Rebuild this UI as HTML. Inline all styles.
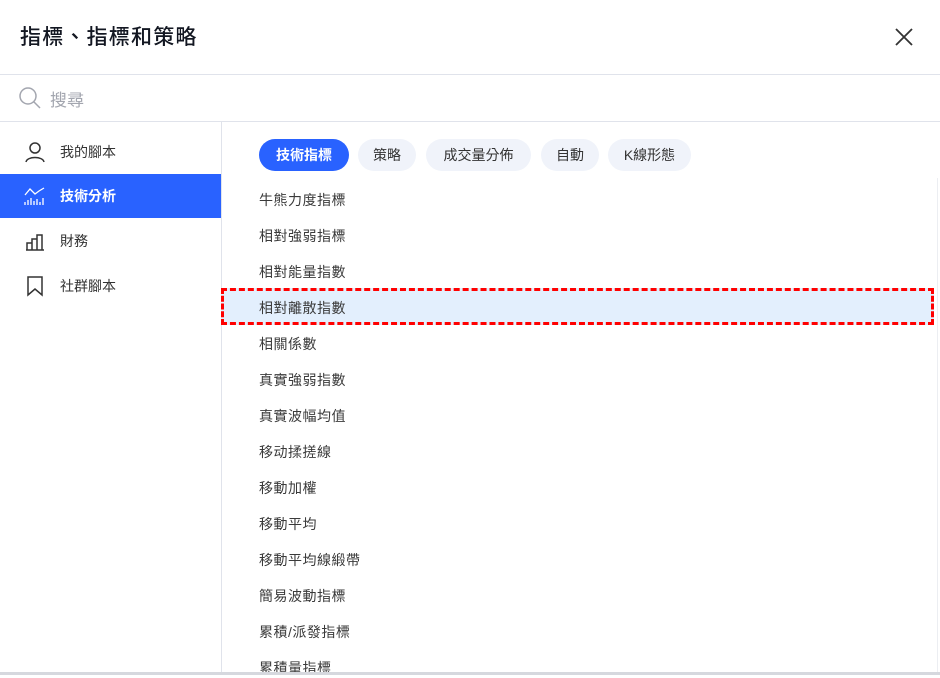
<!DOCTYPE html>
<html><head><meta charset="utf-8"><style>
*{margin:0;padding:0;box-sizing:border-box}
body{width:940px;height:675px;overflow:hidden;background:#fff;font-family:"Liberation Sans","Noto Sans CJK TC",sans-serif;color:#131722;position:relative}
.title{position:absolute;left:20px;top:21px;font-size:21px;font-weight:500;letter-spacing:1.2px}
.hr{position:absolute;left:0;width:940px;height:1px;background:#e0e3eb}
.search{position:absolute;left:50px;top:86px;font-size:17px;color:#a3a6af}
.side{position:absolute;left:0;top:121px;width:222px;height:554px;border-right:1px solid #e0e3eb}
.si{position:absolute;left:0;width:221px;height:44px;font-size:14px;color:#333}
.si span{position:absolute;left:60px;top:12px}
.si svg{position:absolute;left:24px;top:11px}
.act{background:#2962ff;color:#fff;font-weight:bold}
.pill{position:absolute;top:139px;height:32px;border-radius:16px;background:#f0f3fa;font-size:14px;color:#333;text-align:center;line-height:32px}
.item{position:absolute;left:259px;font-size:14px;color:#3a3a3a;letter-spacing:0.5px}
.hl{position:absolute;left:221px;top:288px;width:713px;height:37px;background:#e3effd;border:3px dashed #f00}
</style></head><body>
<div class="title">指標、指標和策略</div>
<svg style="position:absolute;left:894px;top:27px" width="20" height="20" viewBox="0 0 20 20"><path d="M2 2L18 18M18 2L2 18" stroke="#333" stroke-width="1.8"/></svg>
<div class="hr" style="top:74px"></div>
<svg style="position:absolute;left:18px;top:86px" width="24" height="24" viewBox="0 0 24 24"><circle cx="10" cy="10" r="8" fill="none" stroke="#a3a6af" stroke-width="1.5"/><path d="M16 16L22 22" stroke="#a3a6af" stroke-width="1.5"/></svg>
<div class="search">搜尋</div>
<div class="hr" style="top:121px"></div>
<div class="side">
<div class="si" style="top:9px"><svg width="22" height="22" viewBox="0 0 22 22"><circle cx="11" cy="7" r="5" fill="none" stroke="#333" stroke-width="1.5"/><path d="M2 21C3 15 19 15 20 21" fill="none" stroke="#333" stroke-width="1.5"/></svg><span>我的腳本</span></div>
<div class="si act" style="top:53px"><svg width="22" height="22" viewBox="0 0 22 22" stroke="#fff" stroke-width="1.3" fill="none"><path d="M1 10L6 4L11 9L15 6L20 3"/><path d="M1 20v-3M4 20v-5M7 20v-7M10 20v-4M13 20v-6M16 20v-3M19 20v-7"/></svg><span>技術分析</span></div>
<div class="si" style="top:98px"><svg width="22" height="22" viewBox="0 0 22 22" stroke="#333" stroke-width="1.5" fill="none"><path d="M2 20h18M3 20v-7h5v7M8 20v-11h5v11M13 20v-15h5v15"/></svg><span>財務</span></div>
<div class="si" style="top:143px"><svg width="22" height="22" viewBox="0 0 22 22" stroke="#333" stroke-width="1.5" fill="none"><path d="M4 2h14v18l-7-6l-7 6z"/></svg><span>社群腳本</span></div>
</div>
<div class="pill" style="left:259px;width:90px;background:#2962ff;color:#fff;font-weight:bold">技術指標</div>
<div class="pill" style="left:358px;width:58px">策略</div>
<div class="pill" style="left:426px;width:105px">成交量分佈</div>
<div class="pill" style="left:541px;width:58px">自動</div>
<div class="pill" style="left:608px;width:83px">K線形態</div>
<div class="hl"></div>
<div class="item" style="top:190px">牛熊力度指標</div>
<div class="item" style="top:226px">相對強弱指標</div>
<div class="item" style="top:262px">相對能量指數</div>
<div class="item" style="top:298px">相對離散指數</div>
<div class="item" style="top:334px">相關係數</div>
<div class="item" style="top:370px">真實強弱指數</div>
<div class="item" style="top:406px">真實波幅均值</div>
<div class="item" style="top:442px">移动揉搓線</div>
<div class="item" style="top:478px">移動加權</div>
<div class="item" style="top:514px">移動平均</div>
<div class="item" style="top:550px">移動平均線緞帶</div>
<div class="item" style="top:586px">簡易波動指標</div>
<div class="item" style="top:622px">累積/派發指標</div>
<div class="item" style="top:658px">累積量指標</div>
<div style="position:absolute;left:937px;top:178px;width:1px;height:497px;background:#eceef2"></div>
<div style="position:absolute;left:0;top:672px;width:940px;height:3px;background:#d6d8de"></div>
</body></html>
